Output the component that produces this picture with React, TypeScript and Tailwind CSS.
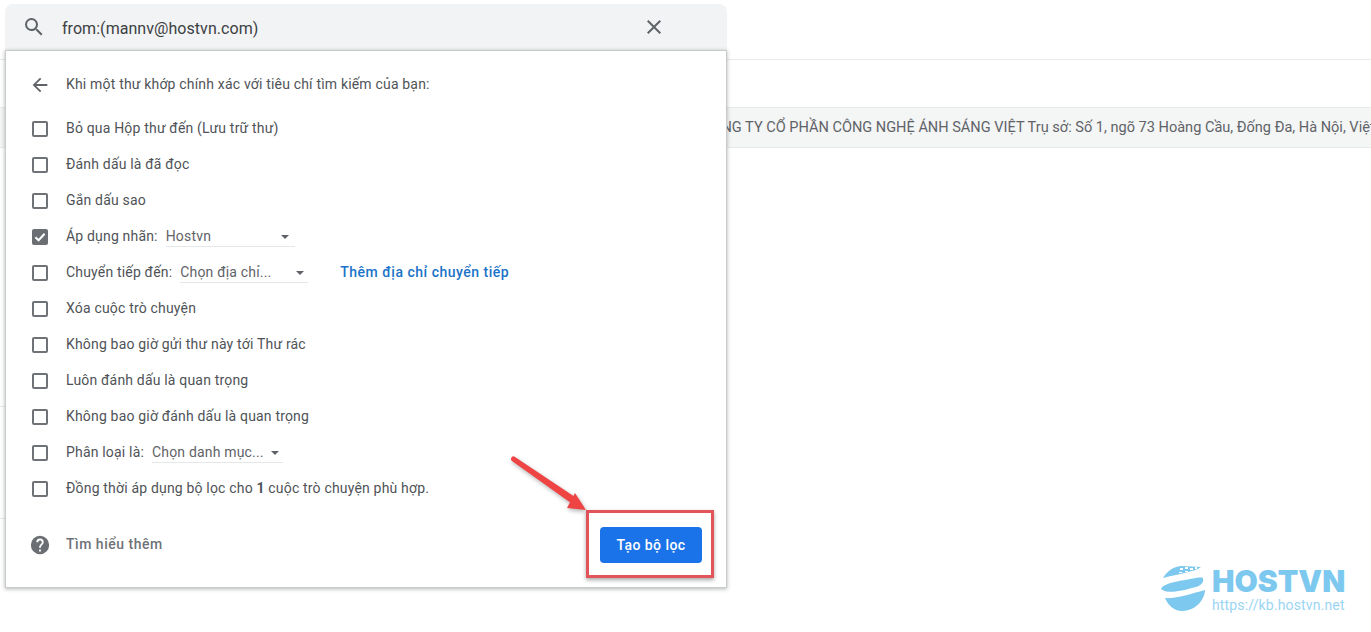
import React from "react";

const Box = ({ checked }: { checked?: boolean }) =>
  checked ? (
    <span className="flex h-[16px] w-[16px] shrink-0 items-center justify-center rounded-[2px] bg-[#6b6e72]">
      <svg viewBox="0 0 16 16" className="h-[16px] w-[16px]" fill="none" stroke="#fff" strokeWidth="2">
        <path d="M3.4 8.2 6.6 11.3 12.6 4.8" />
      </svg>
    </span>
  ) : (
    <span className="h-[16px] w-[16px] shrink-0 rounded-[2px] border-2 border-[#6f7276]" />
  );

const Select = ({ label, w, caretGap }: { label: string; w: string; caretGap: string }) => (
  <span className={`ml-[8px] flex h-[22px] items-center border-b border-[#e6e7e8] pt-[2px] ${w}`}>
    <span className={`text-[#5f6368] ${caretGap}`}>{label}</span>
    <span className="h-0 w-0 border-x-[4px] border-t-[4px] border-x-transparent border-t-[#5f6368]" />
  </span>
);

const Row = ({ children, checked }: { children: React.ReactNode; checked?: boolean }) => (
  <div className="flex h-[36px] items-center">
    <Box checked={checked} />
    <div className="ml-[18px] -mt-[2px] flex items-center whitespace-nowrap text-[14px] tracking-[0.18px] text-[#4f5357]">{children}</div>
  </div>
);

export default function App() {
  return (
    <div className="relative h-[632px] w-[1371px] overflow-hidden bg-white font-['Roboto',sans-serif]">
      {/* page behind the filter panel */}
      <div className="h-[60px] border-b border-[#e9eaeb]" />
      <div className="mt-[47px] flex h-[41px] items-center overflow-hidden whitespace-nowrap border-y border-[#e8e9ea] bg-[#f4f5f5] text-[14.55px] text-[#5f6368]">
        <span className="ml-[702px] mt-[1px]">CÔNG TY CỔ PHẦN CÔNG NGHỆ ÁNH SÁNG VIỆT Trụ sở: Số 1, ngõ 73 Hoàng Cầu, Đống Đa, Hà Nội, Việt Nam</span>
      </div>
      <div className="mt-[258px] h-px w-[5px] bg-[#e9eaeb]" />
      <div className="mt-[111px] h-px w-[5px] bg-[#e9eaeb]" />

      {/* search popup */}
      <div className="absolute left-[5px] top-[4px] w-[722px]">
        <div className="flex h-[46px] items-center rounded-t-[8px] bg-[#f1f3f4]">
          <svg viewBox="0 0 24 24" className="ml-[17px] h-[24px] w-[24px]" fill="#5f6368">
            <path d="M15.5 14h-.79l-.28-.27A6.47 6.47 0 0 0 16 9.5 6.5 6.5 0 1 0 9.5 16c1.61 0 3.09-.59 4.23-1.57l.27.28v.79l5 4.99L20.49 19l-4.99-5zm-6 0C7.01 14 5 11.99 5 9.5S7.01 5 9.5 5 14 7.01 14 9.5 11.99 14 9.5 14z" />
          </svg>
          <span className="ml-[16px] mt-[3px] flex-1 text-[16px] tracking-[0.05px] text-[#3c4043]">from:(mannv@hostvn.com)</span>
          <svg viewBox="0 0 24 24" className="mr-[61px] h-[24px] w-[24px]" fill="#5f6368">
            <path d="M19 6.41 17.59 5 12 10.59 6.41 5 5 6.41 10.59 12 5 17.59 6.41 19 12 13.41 17.59 19 19 17.59 13.41 12z" />
          </svg>
        </div>
        <div className="h-[538px] border border-[#c9cacb] bg-white pl-[26px] pt-[16px] shadow-[0_1px_4px_rgba(60,64,67,0.4)]">
          <div className="flex h-[36px] items-center">
            <svg viewBox="0 0 24 24" className="-ml-[3px] h-[22px] w-[22px]" fill="#5f6368">
              <path d="M20 11H7.83l5.59-5.59L12 4l-8 8 8 8 1.41-1.41L7.83 13H20v-2z" />
            </svg>
            <span className="ml-[15px] -mt-[2px] whitespace-nowrap text-[14px] tracking-[0.18px] text-[#4f5357]">Khi một thư khớp chính xác với tiêu chí tìm kiếm của bạn:</span>
          </div>
          <div className="mt-[8px]">
            <Row>Bỏ qua Hộp thư đến (Lưu trữ thư)</Row>
            <Row>Đánh dấu là đã đọc</Row>
            <Row>Gắn dấu sao</Row>
            <Row checked>
              Áp dụng nhãn:
              <Select label="Hostvn" w="w-[129px]" caretGap="mr-[70px]" />
            </Row>
            <Row>
              Chuyển tiếp đến:
              <Select label="Chọn địa chỉ..." w="w-[128px]" caretGap="mr-[25px]" />
              <span className="ml-[32px] font-medium tracking-[0.5px] text-[#1a73c8]">Thêm địa chỉ chuyển tiếp</span>
            </Row>
            <Row>Xóa cuộc trò chuyện</Row>
            <Row>Không bao giờ gửi thư này tới Thư rác</Row>
            <Row>Luôn đánh dấu là quan trọng</Row>
            <Row>Không bao giờ đánh dấu là quan trọng</Row>
            <Row>
              Phân loại là:
              <Select label="Chọn danh mục..." w="w-[131px]" caretGap="mr-[7px]" />
            </Row>
            <Row>
              <span>
                Đồng thời áp dụng bộ lọc cho <b className="font-bold">1</b> cuộc trò chuyện phù hợp.
              </span>
            </Row>
          </div>
          <div className="mt-[20px] flex items-center">
            <svg viewBox="0 0 24 24" className="-ml-[3px] h-[22px] w-[22px]" fill="#6b6e72">
              <path d="M12 2a10 10 0 1 0 0 20 10 10 0 0 0 0-20zm1 17h-2v-2h2v2zm2.07-7.75-.9.92C13.45 12.9 13 13.5 13 15h-2v-.5c0-1.1.45-2.1 1.17-2.83l1.24-1.26A2 2 0 1 0 10 9H8a4 4 0 1 1 8 0c0 .88-.36 1.68-.93 2.25z" />
            </svg>
            <span className="ml-[15px] -mt-[2px] flex-1 text-[14px] font-medium tracking-[0.5px] text-[#6f7276]">Tìm hiểu thêm</span>
            <button className="mr-[24px] h-[36px] w-[102px] rounded-[4px] bg-[#1a73e8] text-[14px] font-medium tracking-[0.45px] text-white">Tạo bộ lọc</button>
          </div>
        </div>
      </div>

      {/* annotation */}
      <div className="absolute left-[586px] top-[510px] h-[68px] w-[128px] border-[3px] border-[#e2535a] shadow-[0_2px_4px_rgba(0,0,0,0.35)]" />
      <svg className="absolute left-[505px] top-[450px] h-[66px] w-[90px] drop-shadow-[1px_2px_2px_rgba(0,0,0,0.3)]" viewBox="0 0 90 66">
        <path d="M7 11a2.4 2.4 0 0 1 3-4L70 47 66 53z" fill="#ee4444" />
        <path d="M70 43 L81 60 L62 58 Z" fill="#ee4444" />
      </svg>

      {/* watermark */}
      <div className="absolute left-[1160px] top-[566px] flex items-start">
        <svg viewBox="0 0 46 46" className="h-[46px] w-[46px]">
          <path d="M3 12C7 5 14 0 22 0L41 1C34 6 22 7 3 12z" fill="#7cc8ef" />
          <path d="M1 23C3 17 20 15 30 13 36 12 40 11 43 12 44 16 42 19 36 21 24 24 8 29 1 23z" fill="#7cc8ef" />
          <path d="M5 32C16 33 30 28 45 24 45 33 36 45 22 45 14 45 8 39 5 32z" fill="#7cc8ef" />
          <path d="M20 2h3v2h-3zM25 1h3v2h-3zM30 2h3v2h-3zM19 6h3v1h-3zM25 5h3v1h-3zM35 1h2v2h-2z" fill="#ffffff" />
        </svg>
        <div className="ml-[6px] -mt-[1px] flex flex-col">
          <span className="h-[33px] font-['Inter',sans-serif] text-[30px] font-black leading-[33px] text-[#7cc8ef]">HOSTVN</span>
          <span className="text-[14px] leading-[14px] tracking-[0.15px] text-[#9ad5f3]">https://kb.hostvn.net</span>
        </div>
      </div>
    </div>
  );
}
